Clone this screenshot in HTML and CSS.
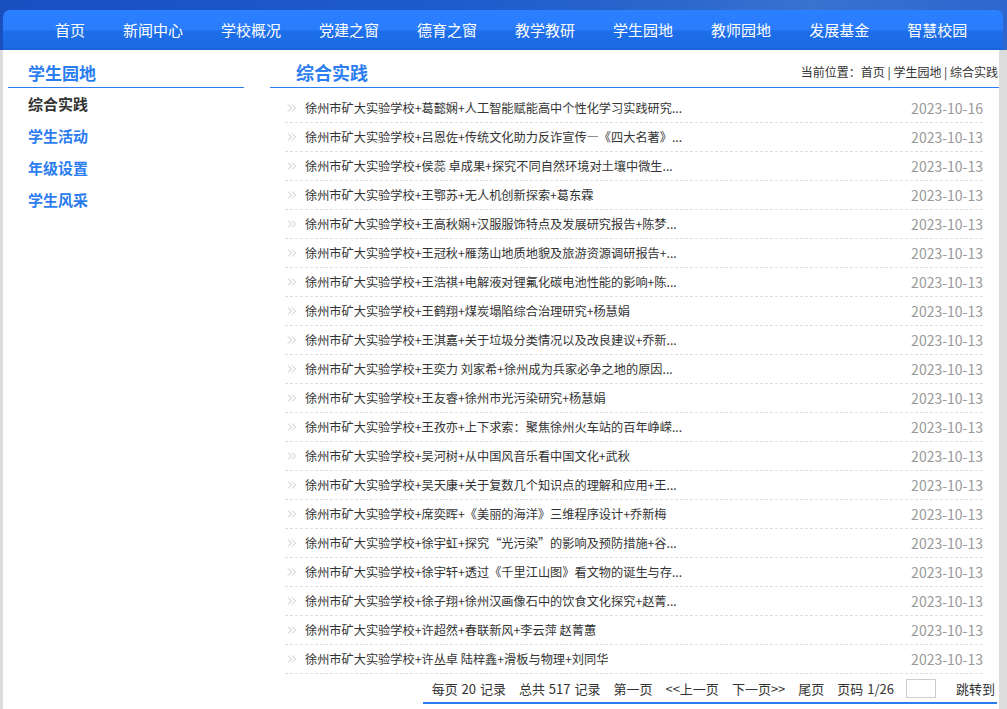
FILE: index.html
```html
<!DOCTYPE html>
<html lang="zh-CN">
<head>
<meta charset="utf-8">
<title>综合实践</title>
<link rel="stylesheet" href="styles.css">
</head>
<body>
<div class="header">
  <ul class="nav">
    <li>首页</li>
    <li>新闻中心</li>
    <li>学校概况</li>
    <li>党建之窗</li>
    <li>德育之窗</li>
    <li>教学教研</li>
    <li>学生园地</li>
    <li>教师园地</li>
    <li>发展基金</li>
    <li>智慧校园</li>
  </ul>
</div>
<div class="page">
  <div class="sidebar">
    <div class="side-title">学生园地</div>
    <ul class="side-menu">
      <li class="active">综合实践</li>
      <li>学生活动</li>
      <li>年级设置</li>
      <li>学生风采</li>
    </ul>
  </div>
  <div class="main">
    <div class="main-head">
      <div class="main-title">综合实践</div>
      <div class="crumb">当前位置：首页 | 学生园地 | 综合实践</div>
    </div>
    <ul class="list">
      <li><svg class="arr" viewBox="0 0 10 10"><path d="M1 1.5L4.5 5L1 8.5M5 1.5L8.5 5L5 8.5" fill="none" stroke="#c4c4c4" stroke-width="1"/></svg><span class="t">徐州市矿大实验学校+葛懿娴+人工智能赋能高中个性化学习实践研究...</span><span class="d">2023-10-16</span></li>
      <li><svg class="arr" viewBox="0 0 10 10"><path d="M1 1.5L4.5 5L1 8.5M5 1.5L8.5 5L5 8.5" fill="none" stroke="#c4c4c4" stroke-width="1"/></svg><span class="t">徐州市矿大实验学校+吕恩佐+传统文化助力反诈宣传—《四大名著》...</span><span class="d">2023-10-13</span></li>
      <li><svg class="arr" viewBox="0 0 10 10"><path d="M1 1.5L4.5 5L1 8.5M5 1.5L8.5 5L5 8.5" fill="none" stroke="#c4c4c4" stroke-width="1"/></svg><span class="t">徐州市矿大实验学校+侯蕊 卓成果+探究不同自然环境对土壤中微生...</span><span class="d">2023-10-13</span></li>
      <li><svg class="arr" viewBox="0 0 10 10"><path d="M1 1.5L4.5 5L1 8.5M5 1.5L8.5 5L5 8.5" fill="none" stroke="#c4c4c4" stroke-width="1"/></svg><span class="t">徐州市矿大实验学校+王鄂苏+无人机创新探索+葛东霖</span><span class="d">2023-10-13</span></li>
      <li><svg class="arr" viewBox="0 0 10 10"><path d="M1 1.5L4.5 5L1 8.5M5 1.5L8.5 5L5 8.5" fill="none" stroke="#c4c4c4" stroke-width="1"/></svg><span class="t">徐州市矿大实验学校+王高秋娴+汉服服饰特点及发展研究报告+陈梦...</span><span class="d">2023-10-13</span></li>
      <li><svg class="arr" viewBox="0 0 10 10"><path d="M1 1.5L4.5 5L1 8.5M5 1.5L8.5 5L5 8.5" fill="none" stroke="#c4c4c4" stroke-width="1"/></svg><span class="t">徐州市矿大实验学校+王冠秋+雁荡山地质地貌及旅游资源调研报告+...</span><span class="d">2023-10-13</span></li>
      <li><svg class="arr" viewBox="0 0 10 10"><path d="M1 1.5L4.5 5L1 8.5M5 1.5L8.5 5L5 8.5" fill="none" stroke="#c4c4c4" stroke-width="1"/></svg><span class="t">徐州市矿大实验学校+王浩祺+电解液对锂氟化碳电池性能的影响+陈...</span><span class="d">2023-10-13</span></li>
      <li><svg class="arr" viewBox="0 0 10 10"><path d="M1 1.5L4.5 5L1 8.5M5 1.5L8.5 5L5 8.5" fill="none" stroke="#c4c4c4" stroke-width="1"/></svg><span class="t">徐州市矿大实验学校+王鹤翔+煤炭塌陷综合治理研究+杨慧娟</span><span class="d">2023-10-13</span></li>
      <li><svg class="arr" viewBox="0 0 10 10"><path d="M1 1.5L4.5 5L1 8.5M5 1.5L8.5 5L5 8.5" fill="none" stroke="#c4c4c4" stroke-width="1"/></svg><span class="t">徐州市矿大实验学校+王淇嘉+关于垃圾分类情况以及改良建议+乔新...</span><span class="d">2023-10-13</span></li>
      <li><svg class="arr" viewBox="0 0 10 10"><path d="M1 1.5L4.5 5L1 8.5M5 1.5L8.5 5L5 8.5" fill="none" stroke="#c4c4c4" stroke-width="1"/></svg><span class="t">徐州市矿大实验学校+王奕力 刘家希+徐州成为兵家必争之地的原因...</span><span class="d">2023-10-13</span></li>
      <li><svg class="arr" viewBox="0 0 10 10"><path d="M1 1.5L4.5 5L1 8.5M5 1.5L8.5 5L5 8.5" fill="none" stroke="#c4c4c4" stroke-width="1"/></svg><span class="t">徐州市矿大实验学校+王友睿+徐州市光污染研究+杨慧娟</span><span class="d">2023-10-13</span></li>
      <li><svg class="arr" viewBox="0 0 10 10"><path d="M1 1.5L4.5 5L1 8.5M5 1.5L8.5 5L5 8.5" fill="none" stroke="#c4c4c4" stroke-width="1"/></svg><span class="t">徐州市矿大实验学校+王孜亦+上下求索：聚焦徐州火车站的百年峥嵘...</span><span class="d">2023-10-13</span></li>
      <li><svg class="arr" viewBox="0 0 10 10"><path d="M1 1.5L4.5 5L1 8.5M5 1.5L8.5 5L5 8.5" fill="none" stroke="#c4c4c4" stroke-width="1"/></svg><span class="t">徐州市矿大实验学校+吴河树+从中国风音乐看中国文化+武秋</span><span class="d">2023-10-13</span></li>
      <li><svg class="arr" viewBox="0 0 10 10"><path d="M1 1.5L4.5 5L1 8.5M5 1.5L8.5 5L5 8.5" fill="none" stroke="#c4c4c4" stroke-width="1"/></svg><span class="t">徐州市矿大实验学校+吴天康+关于复数几个知识点的理解和应用+王...</span><span class="d">2023-10-13</span></li>
      <li><svg class="arr" viewBox="0 0 10 10"><path d="M1 1.5L4.5 5L1 8.5M5 1.5L8.5 5L5 8.5" fill="none" stroke="#c4c4c4" stroke-width="1"/></svg><span class="t">徐州市矿大实验学校+席奕晖+《美丽的海洋》三维程序设计+乔新梅</span><span class="d">2023-10-13</span></li>
      <li><svg class="arr" viewBox="0 0 10 10"><path d="M1 1.5L4.5 5L1 8.5M5 1.5L8.5 5L5 8.5" fill="none" stroke="#c4c4c4" stroke-width="1"/></svg><span class="t">徐州市矿大实验学校+徐宇虹+探究“光污染”的影响及预防措施+谷...</span><span class="d">2023-10-13</span></li>
      <li><svg class="arr" viewBox="0 0 10 10"><path d="M1 1.5L4.5 5L1 8.5M5 1.5L8.5 5L5 8.5" fill="none" stroke="#c4c4c4" stroke-width="1"/></svg><span class="t">徐州市矿大实验学校+徐宇轩+透过《千里江山图》看文物的诞生与存...</span><span class="d">2023-10-13</span></li>
      <li><svg class="arr" viewBox="0 0 10 10"><path d="M1 1.5L4.5 5L1 8.5M5 1.5L8.5 5L5 8.5" fill="none" stroke="#c4c4c4" stroke-width="1"/></svg><span class="t">徐州市矿大实验学校+徐子翔+徐州汉画像石中的饮食文化探究+赵菁...</span><span class="d">2023-10-13</span></li>
      <li><svg class="arr" viewBox="0 0 10 10"><path d="M1 1.5L4.5 5L1 8.5M5 1.5L8.5 5L5 8.5" fill="none" stroke="#c4c4c4" stroke-width="1"/></svg><span class="t">徐州市矿大实验学校+许超然+春联新风+李云萍 赵菁蕙</span><span class="d">2023-10-13</span></li>
      <li><svg class="arr" viewBox="0 0 10 10"><path d="M1 1.5L4.5 5L1 8.5M5 1.5L8.5 5L5 8.5" fill="none" stroke="#c4c4c4" stroke-width="1"/></svg><span class="t">徐州市矿大实验学校+许丛卓 陆梓鑫+滑板与物理+刘同华</span><span class="d">2023-10-13</span></li>
    </ul>
    <div class="pager-wrap">
      <div class="pager">
        <span>每页 20 记录</span>
        <span>总共 517 记录</span>
        <span>第一页</span>
        <span>&lt;&lt;上一页</span>
        <span>下一页&gt;&gt;</span>
        <span>尾页</span>
        <span>页码 1/26</span>
        <span class="box"></span>
        <span class="jump">跳转到</span>
      </div>
    </div>
  </div>
</div>
</body>
</html>
```
FILE: styles.css
```css
* { box-sizing: border-box; }
html, body { margin: 0; padding: 0; }
body {
  background: #dcdcdc;
  font-family: "Noto Sans CJK SC", "Microsoft YaHei", "Noto Sans", sans-serif;
  color: #333;
  height: 709px;
  overflow: hidden;
}
ul { list-style: none; margin: 0; padding: 0; }

.header {
  height: 50px;
  padding: 10px 4px 0 3px;
  background: linear-gradient(100deg, #1a4fc0 0%, #1d5ccc 45%, #2a66cc 65%, #3a72d0 80%, #2c66cf 100%);
}
.nav {
  display: flex;
  height: 40px;
  padding-left: 33px;
  border-radius: 7px 7px 0 0;
  background: linear-gradient(#2b80ff 0%, #2a7cfb 50%, #1e6ee9 52%, #1c6ae4 92%, #1660d6 100%);
}
.nav li {
  padding: 0 19px;
  color: #fff;
  font-size: 15px;
  line-height: 39px;
}

.page {
  width: 996px;
  margin-left: 3px;
  background: #fff;
  display: flex;
  padding: 8px 0 0 5px;
  height: 659px;
}
.sidebar {
  width: 236px;
}
.side-title {
  line-height: 29px;
  padding-left: 20px;
  font-size: 17px;
  font-weight: bold;
  color: #2b7df2;
  border-bottom: 1px solid #2b7df2;
}
.side-menu li {
  line-height: 32px;
  padding-left: 20px;
  font-size: 15px;
  font-weight: bold;
  color: #2a7cf0;
}
.side-menu li.active { color: #333; }

.main {
  width: 729px;
  margin-left: 26px;
}
.main-head {
  display: flex;
  justify-content: space-between;
  align-items: center;
  height: 30px;
  border-bottom: 1px solid #2b7df2;
}
.main-title {
  padding-left: 26px;
  font-size: 18px;
  font-weight: bold;
  color: #2b7df2;
  line-height: 29px;
}
.crumb {
  font-size: 12px;
  color: #333;
  padding-right: 1px;
  margin-top: -2px;
}

.list {
  margin: 6px 16px 0 15px;
}
.list li {
  display: flex;
  align-items: center;
  height: 29px;
  border-bottom: 1px dashed #dedede;
  padding: 0 0 1px 2px;
}
.arr {
  width: 10px;
  height: 10px;
  flex: none;
  margin-right: 8px;
}
.t {
  flex: 1;
  font-size: 12.2px;
  color: #333;
  white-space: nowrap;
}
.d {
  font-size: 14px;
  color: #999;
}

.pager-wrap {
  display: flex;
  justify-content: flex-end;
  padding-right: 2px;
}
.pager {
  display: flex;
  align-items: center;
  height: 30px;
  padding: 0 2px 0 9px;
  border-bottom: 2px solid #2b7df2;
  font-size: 13px;
  color: #333;
  gap: 13px;
}
.pager span { word-spacing: 1px; }
.pager .box {
  width: 30px;
  height: 19px;
  border: 1px solid #ccc;
  margin-left: -1px;
}
.pager .jump { margin-left: 7px; }
```
